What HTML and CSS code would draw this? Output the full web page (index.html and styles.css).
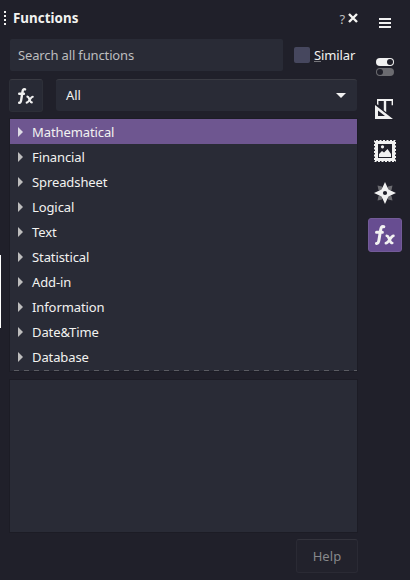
FILE: index.html
```html
<!DOCTYPE html>
<html lang="en">
<head>
<meta charset="utf-8">
<title>Functions</title>
<link rel="stylesheet" href="styles.css">
</head>
<body>
<svg class="defs" width="0" height="0">
  <symbol id="fx" viewBox="0 0 20 20">
    <path d="M8.8 1.7C6.6 1.2 6 2.6 5.6 5L4 14.8C3.6 17.4 3.2 18.6 1.5 18.4M1.5 7.2H7.4" stroke-width="3"/>
    <path d="M11.8 10.8C13.2 10.8 13.4 12.4 14.3 14.4S15.8 18 17.2 18M18.4 10.9C16 11 13.6 18 10.9 18.2" stroke-width="2.7"/>
  </symbol>
</svg>
<div class="app">
  <main class="panel">
    <header class="title">
      <span class="grip"></span>
      <h1>Functions</h1>
      <span class="help-mark">?</span>
      <svg class="close" width="10" height="10" viewBox="0 0 10 10"><path d="M1 1l8 8M9 1L1 9"/></svg>
    </header>
    <div class="search-row">
      <div class="search">Search all functions</div>
      <span class="check"></span>
      <label><u>S</u>imilar</label>
    </div>
    <div class="filter-row">
      <button class="fx-button"><svg class="fx" width="16" height="16"><use href="#fx"/></svg></button>
      <div class="select"><span>All</span><svg width="10" height="5" viewBox="0 0 10 5"><path d="M0 0h10L5 5z"/></svg></div>
    </div>
    <ul class="list">
      <li class="selected">Mathematical</li>
      <li>Financial</li>
      <li>Spreadsheet</li>
      <li>Logical</li>
      <li>Text</li>
      <li>Statistical</li>
      <li>Add-in</li>
      <li>Information</li>
      <li>Date&amp;Time</li>
      <li>Database</li>
    </ul>
    <div class="description"></div>
    <button class="help">Help</button>
  </main>
  <nav class="tabs">
    <div class="tab menu"><svg width="12" height="10" viewBox="0 0 12 10"><path d="M0 0h12v2H0zM0 4h12v2H0zM0 8h12v2H0z"/></svg></div>
    <div class="tab"><svg width="18" height="18" viewBox="0 0 18 18">
      <rect width="18" height="8" rx="4"/><circle class="hole" cx="14" cy="4" r="3"/>
      <rect class="dim" y="10" width="18" height="8" rx="4"/><circle class="hole" cx="4" cy="14" r="3"/>
    </svg></div>
    <div class="tab"><svg width="20" height="20" viewBox="0 0 20 20">
      <path d="M2 0h16v6.3h-1.4V2H11.2v11.2L8.8 11.2V2H3.4v4.3L2 5.2z"/>
      <path fill-rule="evenodd" d="M0 6L18 20H0zM3 11.5V17h7z"/>
    </svg></div>
    <div class="tab"><svg width="22" height="22" viewBox="0 0 22 22">
      <rect width="22" height="22"/>
      <rect class="perf" x=".5" y=".5" width="21" height="21"/>
      <rect class="hole" x="4" y="4" width="14" height="14"/>
      <circle cx="8.5" cy="6.8" r="1.6"/>
      <path d="M5 17v-3l3-3 2 1.5L13.5 9l3.5 5v3z"/>
    </svg></div>
    <div class="tab"><svg width="22" height="22" viewBox="0 0 22 22">
      <path class="dim" d="M3.5 3.5l4.5 1L11 11 4.5 8zM18.5 3.5l-1 4.5L11 11l3-6.5zM3.5 18.5l1-4.5L11 11l-3 6.5zM18.5 18.5l-4.5-1L11 11l6.5 3z"/>
      <path d="M11 0l3.4 7.6L22 11l-7.6 3.4L11 22l-3.4-7.6L0 11l7.6-3.4z"/>
      <circle class="hole" cx="11" cy="11" r="2.1"/>
    </svg></div>
    <div class="tab active"><svg class="fx" width="20" height="20"><use href="#fx"/></svg></div>
  </nav>
</div>
</body>
</html>
```

FILE: styles.css
```css
* { box-sizing: border-box; }

body {
  margin: 0;
  background: #20202a;
  color: #f2f2f0;
  font: 13px/18px "Noto Sans", sans-serif;
  letter-spacing: -0.1px;
}

.defs { display: block; }

svg {
  display: block;
  fill: #f1f1f1;
}

.app {
  display: flex;
  width: 410px;
  height: 580px;
  background: linear-gradient(#fff, #fff) 0 255px / 1px 73px no-repeat;
}

.panel {
  display: flex;
  flex-direction: column;
  width: 358px;
  padding-left: 9px;
}

.title {
  display: flex;
  align-items: center;
  height: 39px;
  margin-left: -5px;
  padding-bottom: 3px;
}

.grip {
  width: 2px;
  height: 14px;
  background: repeating-linear-gradient(#f2f2f0 0 2px, transparent 2px 4px);
}

h1 {
  flex: 1;
  margin: 0 0 0 7px;
  font-size: 13.333px;
  line-height: 18px;
  letter-spacing: 0.05px;
}

.help-mark {
  margin: 2px 3px 0 0;
  color: #bdbdbd;
}

.close {
  fill: none;
  stroke: #f6f6f4;
  stroke-width: 2.4;
}

.search-row {
  display: flex;
  align-items: center;
  height: 32px;
  padding-left: 1px;
}

.search {
  width: 273px;
  height: 32px;
  padding: 7px 8px;
  border-radius: 2px;
  background: #292b36;
  color: #bdbdbf;
  letter-spacing: -0.14px;
}

.check {
  width: 16px;
  height: 16px;
  margin: 0 4px 0 11px;
  border-radius: 2px;
  background: #46475e;
}

u {
  text-decoration: none;
  background: linear-gradient(#77777c, #77777c) 0 calc(100% - 2px) / 100% 1px no-repeat;
}

.filter-row {
  display: flex;
  gap: 13px;
  height: 33px;
  margin-top: 8px;
}

button {
  padding: 0;
  border: 0;
  font: inherit;
}

.fx-button {
  display: grid;
  place-items: center;
  width: 34px;
  height: 33px;
  border: 1px solid #2d2f38;
  border-top-color: #3a3b43;
  border-radius: 3px;
  background: #282a35;
}

#fx {
  fill: none;
  stroke: #f1f1f1;
  stroke-linecap: round;
}

.select {
  display: flex;
  flex: 1;
  align-items: center;
  justify-content: space-between;
  height: 32px;
  margin-right: 1px;
  padding: 0 11px 0 10px;
  border-top: 1px solid #3a3b43;
  border-radius: 3px;
  background: #292b36;
}

.select span { margin-top: -2px; }

.list {
  height: 252px;
  margin: 7px 1px 0;
  padding: 0;
  background:
    repeating-linear-gradient(90deg, transparent 0 4px, #5b5c63 4px 9px, transparent 9px 10px) 0 251px / 100% 1px no-repeat,
    #292b36;
  box-shadow: 0 0 0 1px #1c1c25;
  list-style: none;
}

.list li {
  display: flex;
  align-items: center;
  gap: 9px;
  height: 25px;
  padding-left: 8px;
}

.list li::before {
  content: "";
  border: solid transparent;
  border-width: 5px 0 5px 5px;
  border-left-color: #bdbdbd;
}

.list .selected { background: #6e5690; }
.list .selected::before { border-left-color: #dedbe5; }

.description {
  height: 152px;
  margin: 9px 1px 0;
  background: #292b36;
  box-shadow: 0 0 0 1px #1c1c25;
}

.help {
  align-self: flex-end;
  width: 62px;
  height: 34px;
  margin-top: 7px;
  border: 1px solid #2a2a34;
  border-top-color: #33333c;
  border-radius: 3px;
  background: #22222c;
  color: #87888b;
  letter-spacing: 0.1px;
}

.tabs {
  display: flex;
  flex: 1;
  flex-direction: column;
  align-items: center;
  gap: 8px;
  padding: 5px 0 0 2px;
}

.tab {
  display: grid;
  flex: none;
  place-items: center;
  width: 34px;
  height: 34px;
}

.menu {
  height: 36px;
  margin-bottom: 1px;
}

.active {
  border: 1px solid #735b98;
  border-radius: 3px;
  background: #674d91;
}

.hole { fill: #20202a; }
.dim { fill: #6b6b70; }

.perf {
  fill: none;
  stroke: #20202a;
  stroke-width: 1;
  stroke-dasharray: 1.5 2;
}
```
